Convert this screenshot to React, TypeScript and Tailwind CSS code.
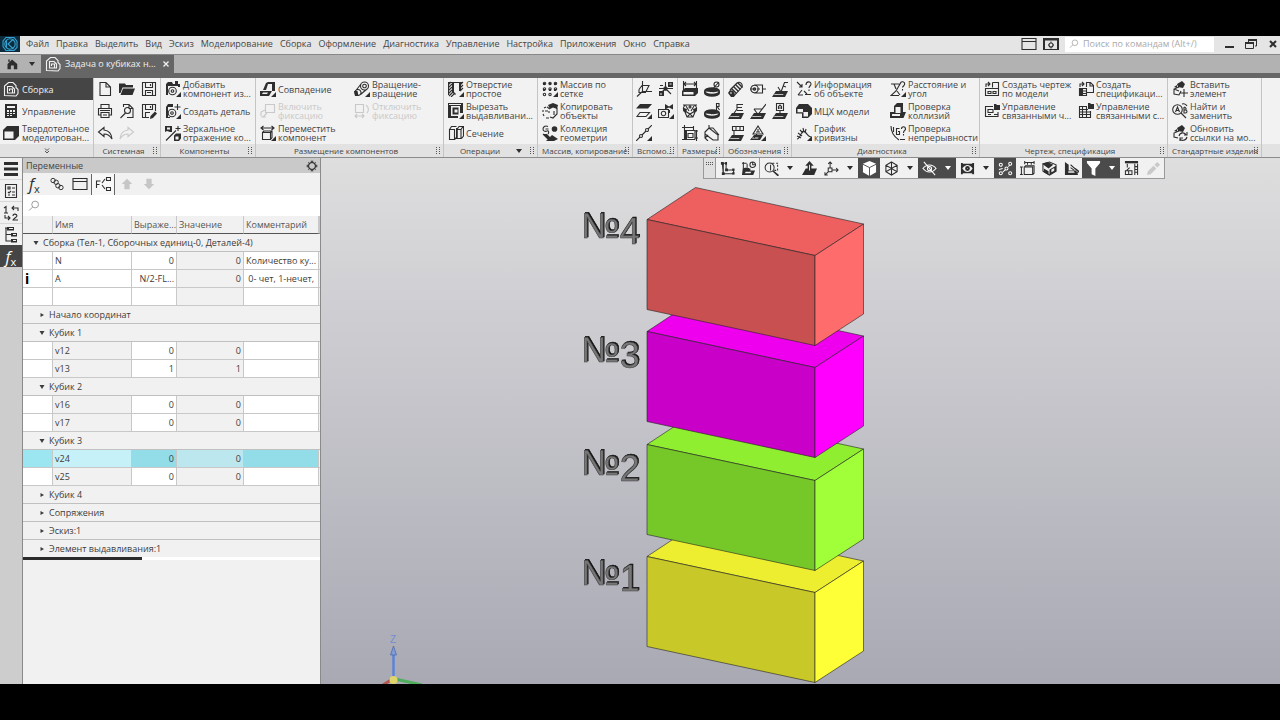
import React from "react";

const c = (x: number, y: number, r: number) =>
  `M${x - r} ${y}a${r} ${r} 0 1 0 ${2 * r} 0a${r} ${r} 0 1 0 ${-2 * r} 0z`;

const TRI = "M16 11v5h-5z";
const SLAB = "M4 10h12l-3 6H0z";
const SLAB_LINE = "M2.500 13.200h9l-.4.8h-9z";
const DISC = "M0 10a8 3.800 0 0 1 16 0v2a8 3.800 0 0 1-16 0z";
const DISC_TOP = "M1.500 10.500a6.500 2.200 0 0 0 13 0l-5 .8z";

type Drawing = { f?: string; w?: string; s?: string; g?: string };

const ICONS: Record<string, Drawing> = {
  logo: { s: "M4 1.5h8l3 4v6l-3 3H4l-3-4V5zM4.5 4v8M11.5 3L6 8l5.5 5" + c(8, 8, 5.2) },
  home: { f: "M8 2l7 6v7h-4.5v-5h-4v5H2V8zM3 2h2v3H3z" },
  asm: { s: "M1.500 14.5V5l4-3.500h4.500l3 3v2l2 2v4l-2 2.500zM4.5 12V5.5h4.500l2.500 2.5v4zM6.500 10V8h3v4" },
  doc: { f: "M2 1h12v14H2z", w: "M4 3h8v2H4zM4 7h2v2H4zM7 7h2v2H7zM10 7h2v2h-2zM4 10h2v1H4zM7 10h2v1H7zM10 10h2v1h-2zM4 12h2v1H4zM7 12h2v1H7z" },
  solid: { f: "M0 5l4-4h12v10l-4 4H0z", w: "M1.500 6.500h9V13.500h-9z" },
  newdoc: { s: "M3 1.5h6l4.5 4.5v8.5H3zM9 1.5V6h4.500" },
  open: { f: "M0 2.500h6l1 1.500h7v2.500H3.500L1.500 12H0zM4 7.500h12L13.500 14H1.500z" },
  save: { s: "M1.500 1.500h13v13h-13zM4.500 1.500v5h7v-5M4.500 14.500v-5h7v5M9.500 3v2M6 11.500h4" },
  saveas: { s: "M8 14.500H1.500v-13h13V8M4.500 1.500v5h7v-5M4.500 14.500v-5H9M9.500 3v2", f: "M9 16l.5-3L14 8.500l2 2L12 15z" },
  print: { s: "M4 5V1.500h8V5M3.500 12h-2V5.500h13V12h-2M4 9.500h8v5H4zM3 7.500h10M6 12h4" },
  preview: { s: "M4.500 4V1.500H10l4 4v9H8M10 1.500v4h4" + c(8.5, 7.5, 3) + "M6.500 10L1.500 15" },
  undo: { s: "M7 2.500L1.500 7L7 11.500V9c4 0 6 1.500 8 5c-.5-6-4-8.500-8-9z" },
  redo: { s: "M9 2.500L14.500 7L9 11.500V9c-4 0-6 1.500-8 5c.5-6 4-8.500 8-9z" },
  addcomp: { f: "M1 3l2-2h4l1 2h7v3h-2v-1H3v9H1zM10 0h3v4h-3z" + TRI, s: c(7.5, 10, 3.8) + c(7.5, 10, 1.3) },
  newpart: { f: "M1 4l2-3h5v3H3v10h2v1H1z" + TRI, s: c(7, 10, 3.8) + c(7, 10, 1.3) + "M12.500 1v6M9.500 4h6" },
  mirror: { f: "M0 1h7v6H5l-3-1-2 1zM9 10.500l2-2h5v5L14 16H9z", w: "M2 2.500h3v2H2zM10.500 11.500h3v3h-3z", s: "M1 15.500L11 5.500M13 1v5M10.500 3.500h5" },
  mate: { f: "M3 9l3-7 2-1h7v9h-3V3H8L6 9zM0 10h12l-3 5H0z" + TRI, w: "M3 11.500h5l-1 1.500H2z" },
  fix: { s: "M5.500 1.500h9v8h-9zM5 7L1 9v4M7 10l-4 4M1 14h5" },
  unfix: { s: "M1.500 1.500h8v8h-8zM1 13h9M3 11l-2 2 2 2M8 11l2 2-2 2M12 2c3 2 3 6 1 8" },
  move: { s: "M2.500 7.500h8v7h-8zM2.500 7.500l1.500-1.500h8v6.500l-1.500 2M10.500 7.500L12 6M1 3h13M3.500 1L1 3l2.500 2M11.500 1L14 3l-2.500 2", f: TRI },
  rot: { s: c(10.5, 5, 4) + c(10.5, 5, 1.8) + c(4, 11.5, 3) + "M7 3L1.500 10M13 8L6.500 13.500", f: "M0 10h3.500l1 5H1z" + TRI },
  hole: { f: "M4 1h2v10l2 2-1 1-3-3zM11 1h2v9h-2z" + TRI, s: "M0 1.500h15M.5 1v13M0 4l3-3M0 7l4-4M0 10l4-4M0 13l4-4M1 15l4-4M3 16l3-3M12 4l3-3M12 7l3-3M12 10l3-3" },
  cut: { f: "M0 0h15v3H3v10h7v2H0zM12 0h3v10h-3zM4.500 4.500h6v7h-6z" + TRI, w: "M1 1h12v1H1zM6.500 6.500h3v3h-3z" },
  section: { s: "M1.500 4.500h5v10h-5zM1.500 4.500l2-3h5M6.500 14.500l2-2M9 4.500h4v9H9zM9 4.500l2-3h4.500v9.500l-2 2.500M13 4.500l2-3", f: "M8 3h1.500v11H8z" },
  grid: { s: c(2.5, 2.5, 1.2) + c(8, 2.5, 1.2) + c(13.5, 2.5, 1.2) + c(2.5, 8, 1.2) + c(8, 8, 1.2) + c(13.5, 8, 1.2) + c(2.5, 13.5, 1.2) + c(8, 13.5, 1.2), f: "M1 2h2v2H1zM7 2h2v2H7zM12 2h2v2h-2zM1 8h2v2H1zM7 8h2v2H7zM12 8h2v2h-2z" + TRI },
  copy: { f: "M6 2l5-2 5 2-1 4-4-1.500L8 6z", s: "M15 5v6l-4 4-3-1M8 6L5 4M4 4L2 5M1 7v2M1 11l1 2M4 15h3M3 8h3M7 8v2M12 8v4" },
  coll: { f: c(12.5, 4, 2.8) + "M1 9h4l3 3 2-2 6 4-4 2H4l2-2z", s: "M6 1.500C3 0 1 2 1 4s2 3 4 2 2 2 1 3M3.500 4h3M1 9l5 5" },
  plane: { s: "M6.500 0v10.500L1 15.500M6.500 10.500H16M3 8.500l3-4h7l-3 6M3 8.500v3h7" },
  csys: { f: "M10 1h5v5h-5zM1 10h5v5H1z", s: "M7.500 1v6.500L4 11M2 4.500h3M1 7.500h14M7.500 7.500L13 13" + c(7.5, 7.5, 1.6), w: "M11.500 2.500h2v1h-2zM2.500 12h1v2h-1z" },
  planes: { f: "M4 1h12l-4 4.500H0z" + TRI, s: "M4 9.500h9.500L10 13.500H1z" },
  ctrl: { f: "M7 1l4 2.500L15 1v5.500l-4-2-4 2zM10 7h2v3h-2z" + TRI, s: "M.5 6.500h10v8H.5z" + c(5.5, 10.5, 2.2) },
  ptline: { s: "M0 16l4-4M6 10l4-4M12 4l4-4" + c(5, 11, 1.5) + c(11, 5, 1.5), f: TRI },
  dim: { f: "M3 7h13v5l-3 3H0v-5z", s: "M1.500 0v9M14.500 0v9M1.500 3h13M4 1L2 3l2 2M12 1l2 2-2 2", w: "M1.500 11h10v2.500h-10z" },
  rad: { f: DISC, w: DISC_TOP, s: "M6 11L15 1" + c(12.5, 3.5, 2.5) },
  ang: { s: "M1 2h14M4 2C1 3 1 6 2 8M12 2c3 1 3 4 2 6M4 3l3 5M12 3L9 8M3 8l5 3 5-3M3 9l2 5h6l2-5M5 14l3-3 3 3" + c(8, 4, 1), f: "M2 5l3 1-1 4-3-2zM14 5l-3 1 1 4 3-2z" },
  rad2: { f: DISC, w: DISC_TOP, s: "M7 11l4-4M12.500 7V.5h2.500v3h-2.500M13.500 4L15.500 7" },
  dim2: { s: "M0 2.500h12M2.500 0v14M11.500 1v4M14.500 5v11M0 14.500h13M6 8.500h5v4H6zM13 6h3M13 13h3M5 5.500h8v9", f: "M3 5h2v9H3z" },
  dim3: { s: "M1 7l4-4 9 7v5h-5L1 9zM5 3V0M5 3h4l6 7M1 9v4l3 3M1 13l3-3" },
  thread: { f: "M0 12l2-3 3 1 2 3-1 3H3zM3 8l1-1 5 5-1 1zM5 6l1-1 5 5-1 1zM7 4l1-1 5 5-1 1zM9 2l1-1 5 5-1 1z", s: "M2 9l7-7c3-2 6 1 5 4l-8 9", w: "M2 12l1-1 1 1-1 1z" },
  cyl: { s: "M4 4h8.500v8H4M0 8h5M7 8h3M12 8h4M12.500 4v8" + c(4.5, 8, 3.7) + c(4.5, 8, 1.2) },
  rough: { f: SLAB, w: SLAB_LINE, s: "M6 6l3 5 3.500-9.500H16M11 5l3 1" },
  base: { f: SLAB, w: SLAB_LINE, s: "M4 13l5-7V1.500h6M9 4.500h5M9 7.500h6" },
  rough2: { f: SLAB, w: SLAB_LINE, s: "M4 6l4 5.500L16 1M4 6h8" },
  datum: { f: SLAB, w: SLAB_LINE, s: "M4.500.5h7v7h-7zM8 7.500V11M6.500 6V3.500L8 2l1.500 1.500V6M6.500 5h3" },
  gd: { f: SLAB, w: SLAB_LINE, s: "M4.500 1.500h11v4h-11zM8 1v5M12 1v5M6 6v6" },
  weld: { f: "M4 10h9l-3 5H0z" + TRI, w: "M2.500 12.600h6l-.4.8h-6z", s: "M8 1l5 8H3zM8 4v3M6 7h4M4 13l3-4" },
  info: { s: "M1 1l5 5M6 3v3H3M6 9l-4 5M2 14h5M8 10l3 3M10 4c0-4 5-4 5-1 0 2-2 2-2 4M13 8.500V10M9 13.500h6" },
  mass: { f: "M0 5l3-4h9l4 4v6l-4 4H6v-4.500H0z", w: "M1.500 6H7v3h5v4.500H7.500V9.200h-6z" },
  curve: { s: "M1 14C5 14 5 3 9 7s3 4 6 5M1 11l4 2M2 8l4 3M4 5l3 3M7 3l1 4M10 4l-1 4", f: TRI },
  dist: { s: "M1 3h9l-4 7-5 4.500h8M7 10l3 4M10.500 2.500c0-3 5-2 4 1 0 1-2 2-2 3M12.500 8v1.500M4 3l2 5", f: TRI },
  coll2: { f: "M4 3l3-3h6v9h3l-2.500 6H0V9h4z", w: "M5.500 4h5v6h-5zM2 11h8v2H2z" },
  cont: { s: "M1 1c0 6 2 10 8 14M9.500 3.500H6.500v6h3v-3H8M11.500 4c0-3 4-3 4 0 0 2-2 1-2 4M13.500 9v1.500M3.500 2v5M10 14.500h5" },
  draw: { s: "M1.500 7.500h13v7h-13zM8.500 1.500h6v6M8.500 1.500v5M2 6V3h4M4 1l2 2-2 2M4 10.500h3v2H4zM9 10.500h3v2H9z" },
  drawm: { f: "M10 1h2l1 1h3v5h-6z", s: "M9 3.500H1.500v10H14V9M4 6.500h5v3H4zM4 11.500h3M10 11.500h4" },
  spec: { s: "M1.500 7.500h7v7h-7zM4.500 7v8M1 10h8M1 12.500h8M8.500 6V1.500h4l3 3v7H9M2 6V3h4M4 1l2 2-2 2M12 2v3h3", f: "M1 7h3v8H1z" },
  specm: { f: "M10 0h2l1 1h3v5h-6z", s: "M9 3.500H1.500v11h11V8M1 6.500h9M1 9h11M1 11.500h11M4.500 4v10M8.500 4v10" },
  insert: { f: "M5 3l5-3 3 3-2 4-5-1zM2 6l3-2v3z", s: "M7 6L2 8v5l5 1 2-4M2 8l5 2M12 8v8M8 12h8" },
  find: { s: c(5.5, 6.5, 4.8) + "M9 10l5 5M3.500 9l2-5L7.500 9M4 7.500h3M12 4v6h1.500c2 0 2-3 0-3H12M13 7c2 0 1-3-1-3M10 1c3-1 4 0 5 2" },
  refresh: { f: "M5 3l5-3 3 3-2 4-5-1zM2 6l3-2v3z", s: "M7 6L2 8v4l4 1M7 11c1-4 6-4 7-1M15 7v3h-3M15 12c-1 4-6 4-7 2M8 16v-3h3" },
  search: { s: c(9.5, 6, 4.5) + "M6 9.500L1.500 14" },
  win: { s: "M1 2.500h14v11H1zM1 5.500h14" },
  wingear: { s: "M1 2.500h14v11H1zM1 4h14M8 5.500v1.500M8 11v1.500M5 9h1.500M9.500 9H11" + c(8, 9, 2), f: "M0 2h16v2H0zM0 2h2v12H0zM14 2h2v12h-2z" },
  gear: { s: c(8, 8, 4.5) + c(8, 8, 5) + "M8 1v2.500M8 12.500V15M1 8h2.500M12.500 8H15M3 3l2 2M11 11l2 2M13 3l-2 2M5 11l-2 2M7 1v2M9 1v2M7 13v2M9 13v2M1 7h2M1 9h2M13 7h2M13 9h2" },
  props: { s: "M2.500 1.500h11v13h-11zM5 4h2v2H5zM9 5h3M5 9l1 1 2-2M9 9h3M5 12h2M9 12h3" },
  swap: { s: "M1 3l2-1.500V8M1 8h4M15 6V3H9M11 1L9 3l2 2M2 10v3h5M5 11l2 2-2 2M10 11c0-3 4-2 4 0 0 1-4 3-4 4h5" },
  tree: { f: "M4 0h7v3.500H4zM8 6h6v3.500H8zM8 12h6v3.500H8z", s: "M2 1h2M3 1v13h5M3 7.500h5", w: "M6 1h4v1H6zM10 7h3v1h-3zM10 13h3v1h-3z" },
  link: { s: c(3.5, 4, 2.5) + c(12.5, 12, 2.5) + c(7, 6, 2.5) + c(9, 10, 2.5) },
  schema: { s: "M1.500 12V5h4M1.500 8.500h3M7 7l3-4M7 9l3 4M11.500 1.500h4v3h-4zM11.500 11.500h4v3h-4z" },
  up: { f: "M8 2l6 6h-3v6H5V8H2z" },
  down: { f: "M8 14l6-6h-3V2H5v6H2z" },
  sketch: { s: "M2.500 2.500h4v7h8v4h-11zM3.500 3v11", f: "M1 1h3v3H1zM5.500 1h2v3h-2zM5.500 8h3v3h-3zM13 8h2.500v2.500H13zM13 12h2.500v2.500H13zM2 12h3v3H2z" },
  sketch2: { f: "M2 8l3-1v3h10l-2 5H1zM5 8h5v2H5z", s: "M2.500 1v12M1 2.500h5M6.500 3v5M4 8h4v3" + c(12.5, 4, 3) + "M12.500 1v3h3", w: "M5 11.500h6l-1 1.500H4z" },
  zoom: { s: c(6, 7, 4.8) + "M9.500 10.500L15 16M9 2.500h2M13 2.500h2M14.500 4v2M14.500 8v2M7 4v6M11 10h2", f: "M10 10l6 5-1 1-6-5z" },
  place: { f: "M4 8h12l-3 7H0zM8 0l4.500 5H10v6H6V5H3.500z", w: "M7.500 4h1v6h-1z" },
  axes: { s: "M6.500 1v7M4.500 3l2-2 2 2M9 9.500h6M13 7.500l2 2-2 2M5 11l-4 4M1 12v3h3M4.500 7.500h4v4h-4z" },
  cube: { f: "M8 0l7 3v9l-7 4-7-4V3z", g: "M1 3.500l7 3.500 7-3.500M8 7v9" },
  wire: { s: "M8 1l6 3.500v7L8 15l-6-3.500v-7zM2 4.500L8 8l6-3.500M8 8v7M8 1v7M2 11.500L8 8l6 3.500" },
  hide: { s: "M1 8c4-5 10-5 14 0-4 5-10 5-14 0zM2 1l12 14" + c(8, 8, 2.2) },
  cam: { f: "M1 2h2v1h10V2h2v12h-2v-1H3v1H1z", w: "M2.500 8c3-5 8-5 11 0-3 5-8 5-11 0z", s: c(8, 8, 2) + c(8, 8, 1) },
  pts: { s: c(3, 4, 1.6) + c(13, 3, 1.6) + c(9, 8, 1.6) + c(3, 13, 1.6) + c(13, 13, 1.6) + "M1 9l4-1M11 6l2-2M5 12l3-3" },
  box: { s: "M4.500 6.500h9v8h-9zM4.500 6.500l1.500-1.500h9v8l-1.500 1.500M5 1.500h10M5 0v3.500M15 0v3.500M0 6.500h3M0 14.500h3M1.500 6v9M8 1v3M12 1v3" },
  clip: { f: "M0 3l6-2 6 3-5 4zM2 8l5 3v4l-5-3zM8 9l7-4v6l-7 4z", s: "M1 3v8l7 4 7-4V4L8 1z", w: "M10 9l3-1.500v3L10 12z" },
  lsec: { f: "M1 1l4 3v6h8l2 5H1z", s: "M7 4l8 7M7 7l4 3M12 14.500l4-3.500-4-3", w: "M4.500 11h6l1 1.500H4.500z" },
  filter: { f: "M1 0h14v2l-5 6v8l-4-2V8L1 2z" },
  cols: { s: "M11.500 3v12M14.500 3v12M3.500 3v4M6 7l-3 3M1.500 10.500h7v4h-7zM5 11v3M11 6h4M11 9h4M11 12h4", f: "M1 0h14v2.500H1z" },
  pen: { f: "M1 15l1-4 6-6 3 3-6 6zM9 4l3-3 3 3-3 3z" },
};

function Icon({ name, light = "#f1f1f1", className = "h-4 w-4" }: { name: string; light?: string; className?: string }) {
  const d = ICONS[name];
  return (
    <svg viewBox="0 0 16 16" className={`shrink-0 ${className}`} aria-hidden="true">
      {d.f && <path d={d.f} fill="currentColor" />}
      {d.w && <path d={d.w} fill={light} />}
      {d.s && <path d={d.s} fill="none" stroke="currentColor" strokeWidth="1.1" />}
      {d.g && <path d={d.g} fill="none" stroke="#4b4b4b" strokeWidth="1" />}
    </svg>
  );
}

function Caret({ className = "" }: { className?: string }) {
  return (
    <svg viewBox="0 0 6 4" className={`h-1 w-1.5 shrink-0 ${className}`} aria-hidden="true">
      <path d="M0 0h6L3 4z" fill="currentColor" />
    </svg>
  );
}

function FxMark() {
  return (
    <span className="font-['Open_Sans'] text-base leading-4 italic">
      f<sub className="text-[11px] not-italic">x</sub>
    </span>
  );
}

function Grip() {
  return (
    <svg viewBox="0 0 4 8" className="h-2 w-1 shrink-0 text-[#555]" aria-hidden="true">
      <path d="M0 0h1v1H0zM3 0h1v1H3zM0 2h1v1H0zM3 2h1v1H3zM0 4h1v1H0zM3 4h1v1H3zM0 6h1v1H0zM3 6h1v1H3z" fill="currentColor" />
    </svg>
  );
}

const MENU = ["Файл", "Правка", "Выделить", "Вид", "Эскиз", "Моделирование", "Сборка", "Оформление", "Диагностика", "Управление", "Настройка", "Приложения", "Окно", "Справка"];

type Cmd = { icon: string; text: string; off?: boolean } | null;

function Group({ label, width, children, caret }: { label: string; width: string; children: React.ReactNode; caret?: boolean }) {
  return (
    <section className={`flex shrink-0 flex-col border-r border-[#c4c4c4] ${width}`}>
      <div className="flex-1">{children}</div>
      <div className="flex h-[13px] items-center gap-1 bg-[#e2e2e2] pr-[3px] pl-1">
        <span className="min-w-0 flex-1 text-center text-[8px] leading-3 whitespace-nowrap text-[#444]">{label}</span>
        {caret && <Caret className="mr-1" />}
        <Grip />
      </div>
    </section>
  );
}

function Commands({ columns }: { columns: Cmd[][] }) {
  return (
    <div className="flex">
      {columns.map((col, i) => (
        <div key={i} className="w-[94px] shrink-0">
          {col.map(
            (cmd) =>
              cmd && (
                <button key={cmd.text} disabled={cmd.off} className={`flex h-[22px] w-full items-center gap-[2px] pl-1 text-left ${cmd.off ? "text-[#c9c9c9]" : ""}`}>
                  <Icon name={cmd.icon} />
                  <span className={`text-[9px] leading-[9px] whitespace-pre ${cmd.off ? "" : "text-[#444]"}`}>{cmd.text}</span>
                </button>
              ),
          )}
        </div>
      ))}
    </div>
  );
}

function IconGrid({ icons, cols }: { icons: [string, string][]; cols: string }) {
  return (
    <div className={`grid justify-center ${cols}`}>
      {icons.map(([icon, label]) => (
        <button key={label} aria-label={label} className={`flex h-[22px] items-center justify-center ${icon === "redo" ? "text-[#c9c9c9]" : ""}`}>
          <Icon name={icon} />
        </button>
      ))}
    </div>
  );
}

function Ribbon() {
  return (
    <div className="flex h-20 shrink-0 overflow-hidden border-b border-[#8c8c8c] bg-[#f2f2f2]">
      <nav className="flex w-[94px] shrink-0 flex-col border-r border-[#c4c4c4]">
        {[
          ["asm", "Сборка"],
          ["doc", "Управление"],
          ["solid", "Твердотельное\nмоделирован..."],
        ].map(([icon, text], i) => (
          <button key={icon} className={`flex h-[22px] items-center gap-[3px] pl-[3px] text-left ${i === 0 ? "bg-[#454545] text-[#f1f1f1]" : ""}`}>
            <Icon name={icon} />
            <span className={`text-[9px] leading-[9px] whitespace-pre ${i === 0 ? "" : "text-[#444]"}`}>{text}</span>
          </button>
        ))}
        <button aria-label="Ещё наборы" className="flex flex-1 items-center justify-center bg-[#e2e2e2]">
          <svg viewBox="0 0 6 6" className="h-1.5 w-1.5" aria-hidden="true">
            <path d="M1 .5l2 2 2-2M1 3l2 2 2-2" fill="none" stroke="currentColor" strokeWidth=".8" />
          </svg>
        </button>
      </nav>
      <Group label="Системная" width="w-[67px]">
        <IconGrid cols="grid-cols-[22px_22px_22px]" icons={[["newdoc", "Создать"], ["open", "Открыть"], ["save", "Сохранить"], ["print", "Печать"], ["preview", "Предварительный просмотр"], ["saveas", "Сохранить как"], ["undo", "Отменить"], ["redo", "Повторить"]]} />
      </Group>
      <Group label="Компоненты" width="w-[95px]">
        <Commands columns={[[{ icon: "addcomp", text: "Добавить\nкомпонент из..." }, { icon: "newpart", text: "Создать деталь" }, { icon: "mirror", text: "Зеркальное\nотражение ко..." }]]} />
      </Group>
      <Group label="Размещение компонентов" width="w-[188px]">
        <Commands
          columns={[
            [{ icon: "mate", text: "Совпадение" }, { icon: "fix", text: "Включить\nфиксацию", off: true }, { icon: "move", text: "Переместить\nкомпонент" }],
            [{ icon: "rot", text: "Вращение-\nвращение" }, { icon: "unfix", text: "Отключить\nфиксацию", off: true }],
          ]}
        />
      </Group>
      <Group label="Операции" width="w-[94px]" caret>
        <Commands columns={[[{ icon: "hole", text: "Отверстие\nпростое" }, { icon: "cut", text: "Вырезать\nвыдавливани..." }, { icon: "section", text: "Сечение" }]]} />
      </Group>
      <Group label="Массив, копирование" width="w-[95px]">
        <Commands columns={[[{ icon: "grid", text: "Массив по\nсетке" }, { icon: "copy", text: "Копировать\nобъекты" }, { icon: "coll", text: "Коллекция\nгеометрии" }]]} />
      </Group>
      <Group label="Вспомо..." width="w-[45px]">
        <IconGrid cols="grid-cols-[22px_22px]" icons={[["plane", "Плоскость"], ["csys", "Система координат"], ["planes", "Смещённая плоскость"], ["ctrl", "Контрольная точка"], ["ptline", "Ось"]]} />
      </Group>
      <Group label="Размеры" width="w-[46px]">
        <IconGrid cols="grid-cols-[22px_22px]" icons={[["dim", "Линейный размер"], ["rad", "Диаметральный размер"], ["ang", "Угловой размер"], ["rad2", "Радиальный размер"], ["dim2", "Авторазмер"], ["dim3", "Размер фаски"]]} />
      </Group>
      <Group label="Обозначения" width="w-[68px]">
        <IconGrid cols="grid-cols-[22px_22px_22px]" icons={[["thread", "Резьба"], ["cyl", "Осевая линия"], ["rough", "Шероховатость"], ["base", "База"], ["rough2", "Клеймо"], ["datum", "Обозначение позиции"], ["gd", "Допуск формы"], ["weld", "Сварка"]]} />
      </Group>
      <Group label="Диагностика" width="w-[188px]">
        <Commands
          columns={[
            [{ icon: "info", text: "Информация\nоб объекте" }, { icon: "mass", text: "МЦХ модели" }, { icon: "curve", text: "График\nкривизны" }],
            [{ icon: "dist", text: "Расстояние и\nугол" }, { icon: "coll2", text: "Проверка\nколлизий" }, { icon: "cont", text: "Проверка\nнепрерывности" }],
          ]}
        />
      </Group>
      <Group label="Чертеж, спецификация" width="w-[188px]">
        <Commands
          columns={[
            [{ icon: "draw", text: "Создать чертеж\nпо модели" }, { icon: "drawm", text: "Управление\nсвязанными ч..." }],
            [{ icon: "spec", text: "Создать\nспецификаци..." }, { icon: "specm", text: "Управление\nсвязанными с..." }],
          ]}
        />
      </Group>
      <Group label="Стандартные изделия" width="w-[94px]">
        <Commands columns={[[{ icon: "insert", text: "Вставить\nэлемент" }, { icon: "find", text: "Найти и\nзаменить" }, { icon: "refresh", text: "Обновить\nссылки на мо..." }]]} />
      </Group>
      <div className="flex flex-1 flex-col justify-end">
        <div className="h-[13px] bg-[#e2e2e2]" />
      </div>
    </div>
  );
}

type Row =
  | { kind: "group"; text: string; open?: boolean; top?: boolean }
  | { kind: "var"; name: string; expr: string; value: string; note: string; flag?: boolean; own?: boolean; selected?: boolean };

const v = (name: string, value: string, selected = false): Row => ({ kind: "var", name, expr: value, value, note: "", selected });

const ROWS: Row[] = [
  { kind: "group", text: "Сборка (Тел-1, Сборочных единиц-0, Деталей-4)", open: true, top: true },
  { kind: "var", name: "N", expr: "0", value: "0", note: "Количество ку...", own: true },
  { kind: "var", name: "A", expr: "N/2-FL...", value: "0", note: " 0- чет, 1-нечет,", own: true, flag: true },
  { kind: "var", name: "", expr: "", value: "", note: "", own: true },
  { kind: "group", text: "Начало координат" },
  { kind: "group", text: "Кубик 1", open: true },
  v("v12", "0"),
  v("v13", "1"),
  { kind: "group", text: "Кубик 2", open: true },
  v("v16", "0"),
  v("v17", "0"),
  { kind: "group", text: "Кубик 3", open: true },
  v("v24", "0", true),
  v("v25", "0"),
  { kind: "group", text: "Кубик 4" },
  { kind: "group", text: "Сопряжения" },
  { kind: "group", text: "Эскиз:1" },
  { kind: "group", text: "Элемент выдавливания:1" },
];

function VariablesTable() {
  const cell = "overflow-hidden border-r border-b border-[#c8c8c8] px-[2px]";
  return (
    <table className="w-full table-fixed border-separate border-spacing-0 text-[9px] leading-[17px] whitespace-pre text-[#3c3c3c]">
      <colgroup>
        <col className="w-[30px]" />
        <col className="w-[79px]" />
        <col className="w-[45px]" />
        <col className="w-[67px]" />
        <col className="w-[75px]" />
        <col />
      </colgroup>
      <thead>
        <tr className="h-[18px] bg-[#f1f1f1] text-left text-[#555]">
          {["", "Имя", "Выраже...", "Значение", "Комментарий", ""].map((h, i) => (
            <th key={i} className="border-r border-b border-r-[#c8c8c8] border-b-[#555] px-[2px] font-normal">
              {h}
            </th>
          ))}
        </tr>
      </thead>
      <tbody>
        {ROWS.map((r, i) =>
          r.kind === "group" ? (
            <tr key={i} className="h-[18px] bg-[#f1f1f1]">
              <th colSpan={6} className="border-b border-[#c0c0c0] p-0 text-left font-normal">
                <button aria-expanded={!!r.open} className={`flex h-[17px] items-center gap-1 ${r.top ? "pl-[10px]" : "pl-4"}`}>
                  <svg viewBox="0 0 6 6" className="h-1.5 w-1.5" aria-hidden="true">
                    <path d={r.open ? "M.5 1h5L3 5z" : "M1.500 1l3.500 2-3.500 2z"} fill="currentColor" />
                  </svg>
                  <span>{r.text}</span>
                </button>
              </th>
            </tr>
          ) : (
            <tr key={i} className="h-[18px] bg-white">
              <td className={`${cell} ${r.selected ? "bg-[#9be6f0]" : ""}`}>
                {r.flag && <b className="block font-sans text-sm leading-[17px] text-black">i</b>}
              </td>
              <td className={`${cell} ${r.selected ? "bg-[#c6f1f8]" : r.own ? "" : "bg-[#f1f1f1]"}`}>{r.name}</td>
              <td className={`${cell} text-right ${r.selected ? "bg-[#93dde9]" : ""}`}>{r.expr}</td>
              <td className={`${cell} text-right ${r.selected ? "bg-[#bde7ef]" : "bg-[#f1f1f1]"}`}>{r.value}</td>
              <td className={`${cell} ${r.selected ? "bg-[#93dde9]" : ""}`}>{r.note}</td>
              <td className="border-b border-[#c8c8c8] bg-[#f1f1f1]" />
            </tr>
          ),
        )}
      </tbody>
    </table>
  );
}

function VariablesPanel() {
  return (
    <aside className="flex w-[299px] shrink-0 flex-col border-x border-[#8a8a8a] bg-[#f1f1f1]">
      <div className="flex h-[15px] items-center justify-between bg-[#c9c9c9] pr-[2px] pl-[3px]">
        <h2 className="text-[9px] text-[#444]">Переменные</h2>
        <button aria-label="Настройка панели">
          <Icon name="gear" className="h-3 w-3" />
        </button>
      </div>
      <div className="flex h-[22px] items-center">
        <button aria-label="Функция" className="w-[23px]">
          <FxMark />
        </button>
        <button aria-label="Ссылка" className="flex w-[22px] justify-center">
          <Icon name="link" className="h-3.5 w-3.5" />
        </button>
        <button aria-label="Таблица" className="flex w-[23px] justify-center">
          <Icon name="win" />
        </button>
        <button aria-label="Схема" className="flex h-[21px] w-6 items-center justify-center border-x border-[#666] bg-[#f7f7f7]">
          <Icon name="schema" />
        </button>
        <button aria-label="Вверх" className="flex w-6 justify-center text-[#c6c6c6]">
          <Icon name="up" className="h-3.5 w-3.5" />
        </button>
        <button aria-label="Вниз" className="flex w-5 justify-center text-[#c6c6c6]">
          <Icon name="down" className="h-3.5 w-3.5" />
        </button>
      </div>
      <label className="flex h-[21px] items-center bg-white pl-[5px] text-[#888]">
        <Icon name="search" className="h-3 w-3" />
        <input aria-label="Поиск переменной" className="min-w-0 flex-1 px-1 text-[9px] outline-none" />
      </label>
      <div className="max-h-[341px] overflow-hidden">
        <VariablesTable />
      </div>
      <div className="h-[3px] shrink-0 bg-white">
        <div className="h-full w-[40%] bg-[#2b2b2b]" />
      </div>
    </aside>
  );
}

const BOXES = [
  { y: 337, n: "1", top: "#eeee30", front: "#c8c828", side: "#ffff38" },
  { y: 225, n: "2", top: "#90ee30", front: "#76c828", side: "#a0ff38" },
  { y: 112, n: "3", top: "#ee00ee", front: "#c800c8", side: "#ff00ff" },
  { y: 0, n: "4", top: "#ee6060", front: "#c85050", side: "#ff6c6c" },
];

const LABEL_Y: Record<string, number> = { "4": 80, "3": 204, "2": 317, "1": 427 };

function Scene() {
  return (
    <svg viewBox="0 0 959 526" className="h-full w-full" role="img" aria-label="Модель сборки">
      {BOXES.map((b) => (
        <g key={b.n} stroke="#222" strokeOpacity=".75" strokeWidth=".8" strokeLinejoin="round">
          <path d={`M326 ${61.5 + b.y}l48.500-32 168 36.500-48.500 31.500z`} fill={b.top} />
          <path d={`M326 ${61.5 + b.y}l168 36v90l-168-36z`} fill={b.front} />
          <path d={`M494 ${97.5 + b.y}l48.500-31.500v90l-48.500 31.500z`} fill={b.side} />
        </g>
      ))}
      {BOXES.map((b) => (
        <text key={b.n} x="260" y={LABEL_Y[b.n]} className="font-['Liberation_Sans'] text-[36px] [filter:drop-shadow(1px_-1px_0_#111)]" fill="#777" stroke="#444" strokeWidth=".6">
          <tspan>№</tspan>
          <tspan dy="6">{b.n}</tspan>
        </text>
      ))}
      <path d="M72.500 520V494" stroke="#5b84d8" strokeWidth="2.5" />
      <path d="M72.500 488l3 9h-6z" fill="#7f9ddc" stroke="#46649f" strokeWidth=".7" />
      <path d="M74 521l27 6" stroke="#4fae5c" strokeWidth="3" />
      <path d="M70 522l-8 5" stroke="#b5564f" strokeWidth="3" />
      <circle cx="72.500" cy="522" r="4" fill="#dfd56a" />
      <text x="69" y="485" className="font-[Liberation_Sans] text-[10px]" fill="#6f8fd0">
        Z
      </text>
    </svg>
  );
}

type Tool = { icon?: string; label: string; on?: boolean; sep?: boolean; off?: boolean };

const TOOLS: Tool[] = [
  { icon: "sketch", label: "Эскиз" },
  { icon: "sketch2", label: "Эскиз по ссылке", sep: true },
  { icon: "zoom", label: "Масштаб" },
  { label: "Варианты масштаба" },
  { icon: "place", label: "Нормально к" },
  { icon: "axes", label: "Ориентация" },
  { label: "Варианты ориентации" },
  { icon: "cube", label: "Полутоновое", on: true },
  { icon: "wire", label: "Каркас" },
  { label: "Варианты каркаса" },
  { icon: "hide", label: "Скрыть", on: true },
  { label: "Варианты скрытия", on: true },
  { icon: "cam", label: "Показать" },
  { label: "Варианты показа" },
  { icon: "pts", label: "Точки", on: true },
  { icon: "box", label: "Габарит" },
  { icon: "clip", label: "Сечение модели" },
  { icon: "lsec", label: "Зоны" },
  { icon: "filter", label: "Фильтр", on: true },
  { label: "Варианты фильтра", on: true },
  { icon: "cols", label: "Свойства" },
  { icon: "pen", label: "Пипетка", off: true },
];

function ViewToolbar() {
  return (
    <div role="toolbar" className="absolute top-0 right-[115px] flex h-[21px] border border-t-0 border-[#999] bg-[#f1f1f1]">
      <span className="flex w-3 justify-center border-r border-[#999] bg-[#e0e0e0] pt-1">
        <svg viewBox="0 0 8 4" className="h-1 w-2" aria-hidden="true">
          <path d="M0 0h1v1H0zM2 0h1v1H2zM4 0h1v1H4zM6 0h1v1H6zM0 2h1v1H0zM2 2h1v1H2zM4 2h1v1H4zM6 2h1v1H6z" fill="#555" />
        </svg>
      </span>
      {TOOLS.map((t) => (
        <button
          key={t.label}
          aria-label={t.label}
          className={`flex items-center justify-center ${t.icon ? "w-[22px]" : "w-4"} ${t.on ? "bg-[#4b4b4b] text-white" : t.off ? "text-[#c9c9c9]" : ""} ${t.sep ? "border-r border-[#999]" : ""}`}
        >
          {t.icon ? <Icon name={t.icon} className="h-[15px] w-[15px]" /> : <Caret />}
        </button>
      ))}
    </div>
  );
}

export default function App() {
  return (
    <div className="flex h-screen flex-col overflow-hidden bg-black py-9 font-['Open_Sans','Noto_Sans',sans-serif] text-[#2e2e2e]">
      <header className="flex h-[18px] shrink-0 items-center bg-[#e5e5e5] pb-[2px] text-[9px]">
        <span className="flex h-4 w-5 items-center justify-center bg-[#0d2b3d] text-[#35a3d0]">
          <Icon name="logo" />
        </span>
        <nav className="flex flex-1 gap-[7px] pl-1.5 text-[#444]">
          {MENU.map((m) => (
            <button key={m}>{m}</button>
          ))}
        </nav>
        <button aria-label="Окна" className="mr-1.5">
          <Icon name="win" />
        </button>
        <button aria-label="Настройка интерфейса" className="mr-1.5">
          <Icon name="wingear" light="#e5e5e5" />
        </button>
        <label className="mr-2 flex h-[15px] w-[149px] items-center bg-white pl-1 text-[#999]">
          <Icon name="search" className="h-2.5 w-2.5" />
          <input aria-label="Поиск по командам" placeholder="Поиск по командам (Alt+/)" className="min-w-0 flex-1 pl-1 text-[9px] outline-none placeholder:text-[#aaa]" />
        </label>
        <div className="flex items-center gap-2">
          <button aria-label="Свернуть">
            <svg viewBox="0 0 14 14" className="h-3.5 w-3.5">
              <path d="M3 9h9v2H3z" fill="currentColor" />
            </svg>
          </button>
          <button aria-label="Восстановить">
            <svg viewBox="0 0 14 14" className="h-3.5 w-3.5">
              <path d="M4.500 5V2.500h8V9H11M1.500 5.500h8v6h-8z" fill="none" stroke="currentColor" />
              <path d="M4 2h9v2H4zM1 5h9v2H1z" fill="currentColor" />
            </svg>
          </button>
          <button aria-label="Закрыть">
            <svg viewBox="0 0 14 14" className="h-3.5 w-3.5">
              <path d="M4 4l6 6M10 4l-6 6" stroke="currentColor" strokeWidth="2" />
            </svg>
          </button>
        </div>
      </header>

      <div className="flex h-6 shrink-0 border-t border-b-[5px] border-t-[#888] border-b-[#666] bg-[#b2b2b2]">
        <div className="flex w-[41px] items-center justify-between pr-1.5 pl-[6px]">
          <button aria-label="Стартовая страница">
            <Icon name="home" className="h-3 w-3" />
          </button>
          <Caret />
        </div>
        <div className="flex w-[133px] items-center gap-1 bg-[#666] pl-1 text-[#f1f1f1]">
          <Icon name="asm" />
          <span className="flex-1 text-[9px] whitespace-nowrap">Задача о кубиках н...</span>
          <button aria-label="Закрыть вкладку" className="mr-1">
            <svg viewBox="0 0 8 8" className="h-2 w-2">
              <path d="M1.500 1.500l5 5M6.500 1.500l-5 5" stroke="currentColor" strokeWidth="1.3" />
            </svg>
          </button>
        </div>
      </div>

      <Ribbon />

      <main className="flex min-h-0 flex-1">
        <nav className="flex w-[22px] shrink-0 flex-col bg-[#cdcdcd]">
          <button aria-label="Панели" className="flex h-[21px] items-center justify-center bg-[#f1f1f1]">
            <svg viewBox="0 0 14 16" className="h-4 w-3.5">
              <path d="M0 1h14v3H0zM0 6.500h14v3H0zM0 12h14v3H0z" fill="currentColor" />
            </svg>
          </button>
          {[
            ["props", "Параметры"],
            ["swap", "Порядок"],
            ["tree", "Дерево"],
          ].map(([icon, label]) => (
            <button key={icon} aria-label={label} className="flex h-[22px] items-center justify-center border-t border-[#d8d8d8] bg-[#f1f1f1]">
              <Icon name={icon} />
            </button>
          ))}
          <button aria-label="Переменные" className="h-[22px] bg-[#454545] text-white">
            <FxMark />
          </button>
        </nav>
        <VariablesPanel />
        <div className="relative min-w-0 flex-1 bg-linear-to-b from-[#dededf] to-[#a9a9b4]">
          <Scene />
          <ViewToolbar />
        </div>
      </main>
    </div>
  );
}
